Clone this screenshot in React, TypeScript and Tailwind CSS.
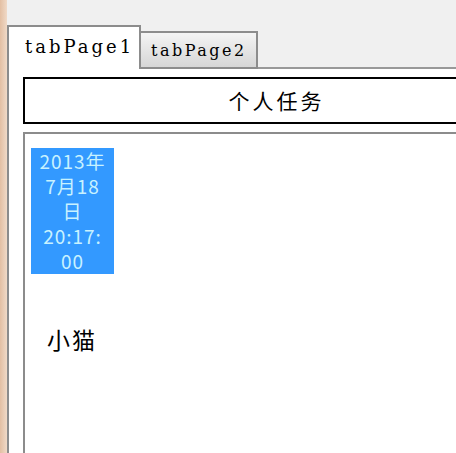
import React from "react";

export default function App() {
  const cjk = { fontFamily: '"Noto Sans CJK SC", "Noto Sans", sans-serif' };
  const serif = { fontFamily: '"DejaVu Serif", "Liberation Serif", serif' };
  return (
    <div className="flex w-[456px] h-[453px] overflow-hidden bg-[#f0f0f0]">
      <div className="w-[7px] shrink-0 bg-gradient-to-r from-[#e3bfa3] to-[#f0dac8]" />
      <div className="flex flex-col flex-1 min-w-0 pt-[25px]">
        <div className="flex items-end h-[44px] shrink-0">
          <div
            className="w-[134px] h-[44px] shrink-0 bg-white border-l-2 border-t-2 border-r-2 border-[#8c8c8c] flex items-center pl-[16px] pb-[4px] text-[18px] tracking-[3px] text-black"
            style={serif}
          >
            tabPage1
          </div>
          <div
            className="w-[117px] h-[38px] shrink-0 bg-gradient-to-b from-[#f4f4f4] to-[#d6d6d6] border-t-2 border-r-2 border-b-2 border-[#8c8c8c] flex items-center pl-[10px] pt-[2px] text-[16px] tracking-[2.5px] text-black"
            style={serif}
          >
            tabPage2
          </div>
          <div className="flex-1 border-b-2 border-[#999999]" />
        </div>
        <div className="flex-1 flex flex-col bg-white border-l-2 border-[#8c8c8c] pl-[14px] pt-[8px] min-h-0">
          <div
            className="w-[507px] h-[47px] shrink-0 border-2 border-black flex items-center justify-center text-[21px] tracking-[3px] text-black"
            style={cjk}
          >
            个人任务
          </div>
          <div className="mt-[8px] flex-1 w-[600px] border-l-2 border-t-2 border-[#8c8c8c] pl-[6px] pt-[14px]">
            <div
              className="w-[83px] h-[126px] bg-[#3399ff] text-[#c8f2ff] text-[19px] leading-[25px] tracking-[1px] text-center"
              style={cjk}
            >
              <div>2013年</div>
              <div>7月18</div>
              <div>日</div>
              <div>20:17:</div>
              <div>00</div>
            </div>
            <div
              className="mt-[52px] ml-[16px] text-[23px] leading-[26px] tracking-[2px] text-black"
              style={cjk}
            >
              小猫
            </div>
          </div>
        </div>
      </div>
    </div>
  );
}
